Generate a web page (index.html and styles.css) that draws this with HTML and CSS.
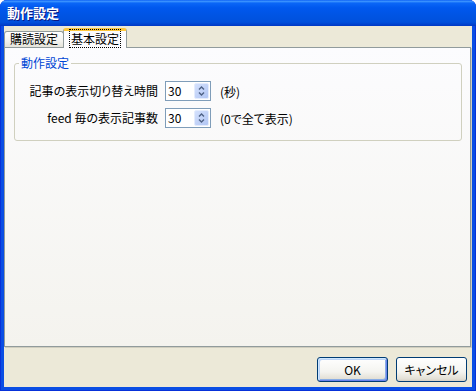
FILE: index.html
```html
<!DOCTYPE html>
<html lang="ja">
<head>
<meta charset="utf-8">
<title>動作設定</title>
<link rel="stylesheet" href="styles.css">
</head>
<body>
<div class="window">
  <div class="titlebar"><span class="title">動作設定</span></div>
  <div class="client">
    <div class="tabs">
      <div class="tab">購読設定</div>
      <div class="tab active"><span class="focus">基本設定</span></div>
    </div>
    <div class="pane">
      <fieldset class="group">
        <legend>動作設定</legend>
        <div class="form">
          <span class="lbl">記事の表示切り替え時間</span>
          <div class="spin"><span class="val">30</span>
            <svg class="spinbtn" width="15" height="16" viewBox="0 0 15 16"><defs><linearGradient id="g1" x1="0" y1="0" x2="1" y2="1"><stop offset="0" stop-color="#D6E2FD"/><stop offset="1" stop-color="#AFC4F3"/></linearGradient></defs><rect x="0.5" y="0.5" width="14" height="15" rx="1.5" fill="url(#g1)" stroke="#E4ECFD"/><path d="M5 6.5 L7.5 4 L10 6.5 M5 9.5 L7.5 12 L10 9.5" fill="none" stroke="#4D6185" stroke-width="1.4"/></svg>
          </div>
          <span class="unit">(秒)</span>
          <span class="lbl">feed 毎の表示記事数</span>
          <div class="spin"><span class="val">30</span>
            <svg class="spinbtn" width="15" height="16" viewBox="0 0 15 16"><rect x="0.5" y="0.5" width="14" height="15" rx="1.5" fill="url(#g1)" stroke="#E4ECFD"/><path d="M5 6.5 L7.5 4 L10 6.5 M5 9.5 L7.5 12 L10 9.5" fill="none" stroke="#4D6185" stroke-width="1.4"/></svg>
          </div>
          <span class="unit">(0で全て表示)</span>
        </div>
      </fieldset>
    </div>
    <div class="buttons">
      <button class="btn default">OK</button>
      <button class="btn">キャンセル</button>
    </div>
  </div>
</div>
</body>
</html>
```
FILE: styles.css
```css
html, body {
  margin: 0;
  background: #ffffff;
}
body {
  font-family: "Noto Sans CJK JP", "Noto Sans", sans-serif;
  font-size: 12px;
  font-feature-settings: "palt";
  color: #000;
}
.window {
  width: 476px;
  height: 391px;
  display: flex;
  flex-direction: column;
  background: #0A4EE4;
  border-radius: 7px 7px 0 0;
  box-shadow: inset 1px 0 #0831D9, inset -1px 0 #0831D9, inset 0 -1px #0831D9;
}
.titlebar {
  height: 26px;
  flex: none;
  display: flex;
  align-items: center;
  padding-left: 7px;
  border-radius: 7px 7px 0 0;
  background: linear-gradient(#0A5DF4 0%, #3D95FF 5%, #0A66F7 12%, #0058EE 30%, #0054E3 60%, #0050DC 85%, #0038C4 100%);
  color: #fff;
  font-weight: bold;
  font-size: 13px;
  line-height: 14px;
  text-shadow: 1px 1px #0A1883;
}
.client {
  flex: 1;
  margin: 0 4px 4px 4px;
  background: #ECE9D8;
  display: flex;
  flex-direction: column;
}
.tabs {
  display: flex;
  align-items: flex-end;
  height: 19px;
  margin-top: 2px;
  position: relative;
  z-index: 1;
}
.tab {
  box-sizing: border-box;
  height: 16px;
  width: 60px;
  border: 1px solid #919B9C;
  border-bottom: none;
  border-radius: 3px 3px 0 0;
  background: linear-gradient(#FFFFFF, #F3F3EF 60%, #E5E3DA);
  text-align: center;
  line-height: 14px;
}
.tab.active {
  height: 20px;
  width: 64px;
  margin-left: -1px;
  margin-bottom: -1px;
  background: #FCFCFE;
  border-top: 3px solid #FFC83C;
  line-height: 16px;
}
.focus {
  outline: 1px dotted #000;
  padding: 0 1px;
}
.pane {
  box-sizing: border-box;
  height: 300px;
  margin-right: 1px;
  border: 1px solid #919B9C;
  background: linear-gradient(#FCFCFE, #F4F3EE);
  box-shadow: 1px 1px #D0CEBF;
  padding: 0 8px 0 9px;
}
.group {
  margin: 9px 0 0 0;
  padding: 0 0 12px 0;
  border: 1px solid #D0D0BF;
  border-radius: 3px;
}
.group legend {
  color: #0046D5;
  padding: 0 2px;
  margin-left: 4px;
  line-height: 12px;
}
.form {
  display: grid;
  grid-template-columns: 143px 46px auto;
  column-gap: 7px;
  row-gap: 7px;
  align-items: center;
  padding-top: 12px;
}
.lbl {
  text-align: right;
  line-height: 14px;
}
.unit {
  margin-left: 2px;
}
.spin {
  box-sizing: border-box;
  height: 20px;
  border: 1px solid #7F9DB9;
  background: #fff;
  display: flex;
  align-items: center;
  justify-content: space-between;
  padding: 0 1px 0 2px;
}
.val {
  line-height: 14px;
}
.spinbtn {
  display: block;
}
.buttons {
  display: flex;
  justify-content: flex-end;
  gap: 8px;
  padding: 10px 5px 0 0;
}
.btn {
  width: 71px;
  height: 25px;
  box-sizing: border-box;
  border: 1px solid #003C74;
  border-radius: 3px;
  background: linear-gradient(#FFFFFF, #F4F4F0 60%, #E3E0D6 90%, #D6D0C5);
  font-family: inherit;
  font-size: 12px;
  font-feature-settings: "palt";
  color: #000;
  padding: 0;
}
.btn.default {
  box-shadow: inset 1px 1px #CEE7FF, inset -1px -1px #6982EE, inset 2px 2px #BCD4F6, inset -2px -2px #89ADE4;
}
```
